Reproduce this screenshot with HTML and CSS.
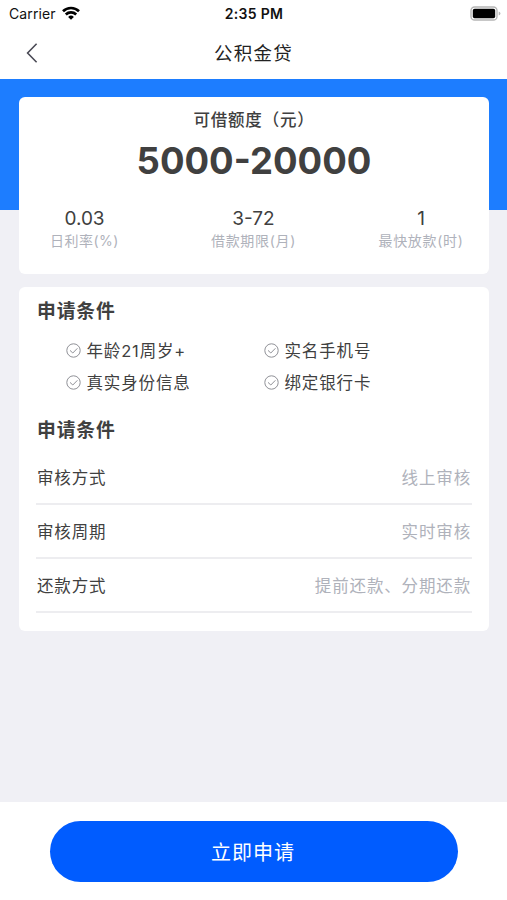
FILE: index.html
```html
<!DOCTYPE html>
<html lang="zh-CN">
<head>
  <meta charset="UTF-8" />
  <meta name="viewport" content="width=device-width, initial-scale=1.0"/>
  <title>公积金贷</title>
  <link rel="stylesheet" href="styles.css">
</head>
<body>
  <div class="status-bar">
    <div class="carrier">
      <span>Carrier</span>
      <svg width="18" height="14" viewBox="0 0 18 14" fill="none" stroke="#000" stroke-width="2.7">
        <path d="M1 5.2A11.6 11.6 0 0 1 17 5.2"/>
        <path d="M3.8 8.5A7.6 7.6 0 0 1 14.2 8.5"/>
        <path d="M6.1 10.9A4.2 4.2 0 0 1 11.9 10.9L9 13.8Z" fill="#000" stroke="none"/>
      </svg>
    </div>
    <div class="time">2:35 PM</div>
    <div class="battery">
      <svg width="31" height="15" viewBox="0 0 31 15">
        <rect x="1" y="1" width="26" height="13" rx="3.6" fill="#fff" stroke="#b5b5b5" stroke-width="1.4"/>
        <rect x="2.8" y="2.8" width="22.4" height="9.4" rx="1.8" fill="#000"/>
        <path d="M28.7 5.4Q30.4 6 30.4 7.5T28.7 9.6Z" fill="#b5b5b5"/>
      </svg>
    </div>
  </div>

  <header class="nav-bar">
    <a class="back" href="#" aria-label="返回">
      <svg width="12" height="20" viewBox="0 0 12 20" fill="none" stroke="#4a4a55" stroke-width="1.6">
        <path d="M10.6 .8L1.6 10L10.6 19.2"/>
      </svg>
    </a>
    <h1>公积金贷</h1>
  </header>

  <main class="content">
    <section class="card quota">
      <div class="quota-label">可借额度（元）</div>
      <div class="quota-amount">5000-20000</div>
      <div class="stats">
        <div class="stat"><b>0.03</b><span>日利率(%)</span></div>
        <div class="stat"><b>3-72</b><span>借款期限(月)</span></div>
        <div class="stat"><b>1</b><span>最快放款(时)</span></div>
      </div>
    </section>

    <section class="card detail">
      <h2>申请条件</h2>
      <ul class="conditions">
        <li><svg class="check" viewBox="0 0 15 15"><circle cx="7.5" cy="7.5" r="6.7"/><path d="M4 7.4L6.8 10L11.4 5.3"/></svg><span>年龄21周岁+</span></li>
        <li><svg class="check" viewBox="0 0 15 15"><circle cx="7.5" cy="7.5" r="6.7"/><path d="M4 7.4L6.8 10L11.4 5.3"/></svg><span>实名手机号</span></li>
        <li><svg class="check" viewBox="0 0 15 15"><circle cx="7.5" cy="7.5" r="6.7"/><path d="M4 7.4L6.8 10L11.4 5.3"/></svg><span>真实身份信息</span></li>
        <li><svg class="check" viewBox="0 0 15 15"><circle cx="7.5" cy="7.5" r="6.7"/><path d="M4 7.4L6.8 10L11.4 5.3"/></svg><span>绑定银行卡</span></li>
      </ul>

      <h2>申请条件</h2>
      <div class="rows">
        <div class="row"><span>审核方式</span><span class="value">线上审核</span></div>
        <div class="row"><span>审核周期</span><span class="value">实时审核</span></div>
        <div class="row"><span>还款方式</span><span class="value">提前还款、分期还款</span></div>
      </div>
    </section>
  </main>

  <footer class="footer">
    <button class="btn">立即申请</button>
  </footer>
</body>
</html>
```
FILE: styles.css
```css
:root {
  --bg: #f0f0f5;
  --blue: #1d7dff;
  --btn-bg: #005cff;
  --text: #404040;
  --muted: #afb2bb;
}

* {
  box-sizing: border-box;
}

body {
  font-family: Inter, 'Noto Sans CJK SC', sans-serif;
  background: #fff;
  color: var(--text);
  margin: 0;
  height: 900px;
  display: flex;
  flex-direction: column;
  overflow: hidden;
}

h1, h2, ul {
  margin: 0;
  padding: 0;
}

.status-bar {
  height: 27px;
  padding: 0 6px 0 9px;
  display: grid;
  grid-template-columns: 1fr auto 1fr;
  align-items: center;
  color: #111;
  font-size: 14px;
}

.carrier {
  display: flex;
  align-items: center;
  gap: 6px;
  letter-spacing: 0.1px;
}

.carrier svg {
  margin-top: -2px;
}

.time {
  font-weight: 600;
  letter-spacing: 0.3px;
  margin-right: 2px;
}

.battery {
  display: flex;
  justify-content: flex-end;
}

.nav-bar {
  height: 52px;
  padding: 0 26px;
  display: grid;
  grid-template-columns: 1fr auto 1fr;
  align-items: center;
}

.back {
  display: flex;
}

.nav-bar h1 {
  font-size: 18.5px;
  line-height: 26px;
  font-weight: 400;
  letter-spacing: 1.3px;
  color: #222;
}

.content {
  flex: 1;
  padding: 18px 18px 0 19px;
  display: flex;
  flex-direction: column;
  gap: 13px;
  background: linear-gradient(var(--blue), var(--blue)) 0 0 / 100% 131px no-repeat var(--bg);
}

.card {
  background: #fff;
  border-radius: 6px;
}

.quota {
  height: 176.5px;
  padding-top: 11px;
  text-align: center;
}

.quota-label {
  font-size: 16.5px;
  line-height: 24px;
  font-weight: 500;
  letter-spacing: 0.8px;
}

.quota-amount {
  font-size: 36.5px;
  line-height: 46px;
  font-weight: 700;
  margin-top: 6px;
}

.stats {
  display: grid;
  grid-template-columns: 131px 1fr 136px;
  margin-top: 23px;
}

.stat {
  display: flex;
  flex-direction: column;
  align-items: center;
}

.stat b {
  font-size: 19px;
  line-height: 24px;
  font-weight: 400;
}

.stat span {
  font-size: 14px;
  line-height: 20px;
  letter-spacing: 0.7px;
  color: var(--muted);
}

.stat:first-child span {
  letter-spacing: 0.5px;
}

.stat:nth-child(2) {
  padding-left: 4px;
}

.detail {
  height: 344.5px;
  padding: 11px 17px 0 18px;
}

.detail h2 {
  font-size: 18.8px;
  line-height: 28px;
  font-weight: 700;
  letter-spacing: 0.9px;
}

.conditions {
  list-style: none;
  display: grid;
  grid-template-columns: 198px 1fr;
  grid-auto-rows: 32px;
  padding: 9px 0 18px 29px;
}

.conditions li {
  display: flex;
  align-items: center;
  gap: 5.5px;
  font-size: 16.5px;
  letter-spacing: 0.85px;
}

.conditions span {
  padding-bottom: 2px;
}

.check {
  width: 15px;
  height: 15px;
  fill: none;
  stroke: #8f9096;
  stroke-width: 1;
}

.rows {
  padding-top: 6px;
  margin-left: -1px;
}

.row {
  height: 54px;
  padding-left: 1px;
  display: flex;
  justify-content: space-between;
  align-items: center;
  border-bottom: 2px solid #ededf0;
  font-size: 16.5px;
  letter-spacing: 0.85px;
}

.value {
  color: var(--muted);
  padding-right: 1px;
}

.footer {
  height: 98px;
  padding: 19px 49px 0 50px;
}

.btn {
  width: 100%;
  height: 61px;
  padding: 0 2px 0 0;
  border: none;
  border-radius: 31px;
  background: var(--btn-bg);
  color: #fff;
  font-family: inherit;
  font-size: 20px;
  letter-spacing: 1px;
  cursor: pointer;
}
```
